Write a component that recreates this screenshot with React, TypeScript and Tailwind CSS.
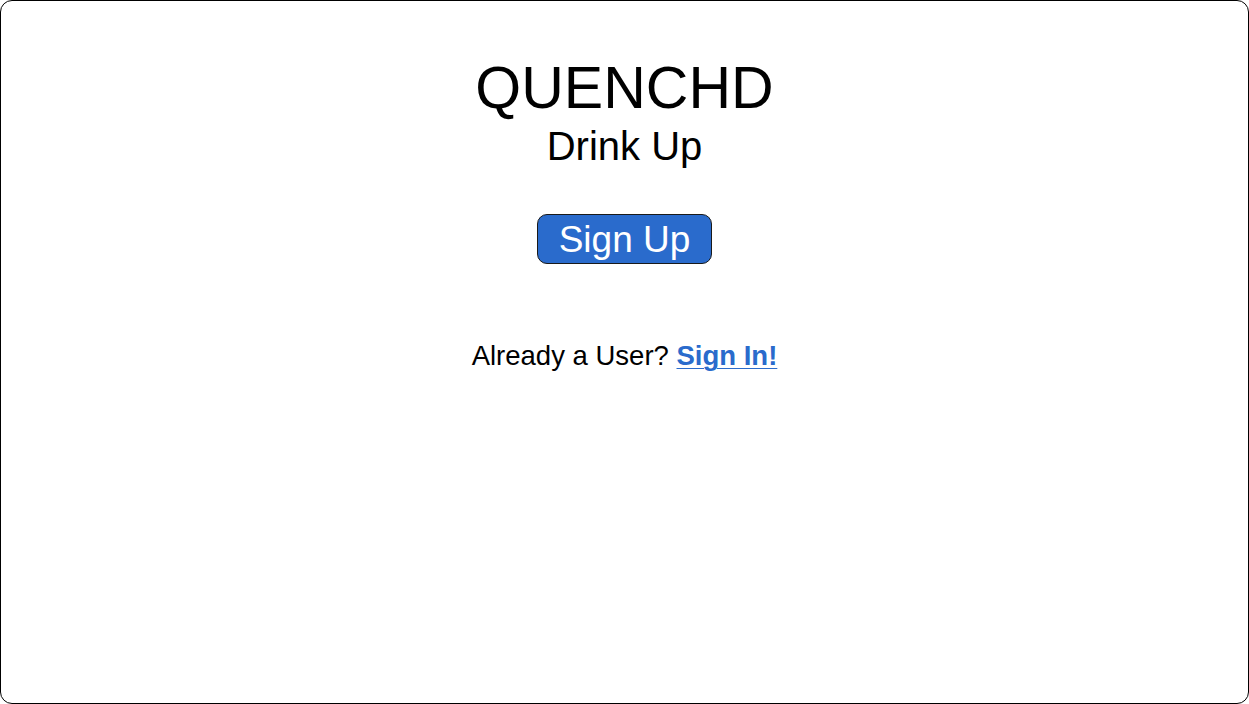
export default function App() {
  return (
    <div className="w-[1249px] h-[704px] bg-white">
      <div
        className="w-full h-full border border-black rounded-[12px] flex flex-col items-center text-black"
        style={{ fontFamily: '"Liberation Sans", Arial, Helvetica, sans-serif' }}
      >
        <h1 className="mt-[58px] text-[59px] leading-none font-normal">QUENCHD</h1>
        <h2 className="mt-[8px] text-[40px] leading-none font-normal">Drink Up</h2>
        <button className="mt-[48px] w-[175px] h-[50px] flex items-center justify-center bg-[#2a6bcc] text-white text-[37px] leading-none border border-[#1a1a1a] rounded-[10px]">
          Sign Up
        </button>
        <p className="mt-[78px] text-[27.5px] leading-none">
          Already a User?{" "}
          <a href="#" className="font-bold text-[#2a6bcc] underline underline-offset-[3px] decoration-1">
            Sign In!
          </a>
        </p>
      </div>
    </div>
  );
}
